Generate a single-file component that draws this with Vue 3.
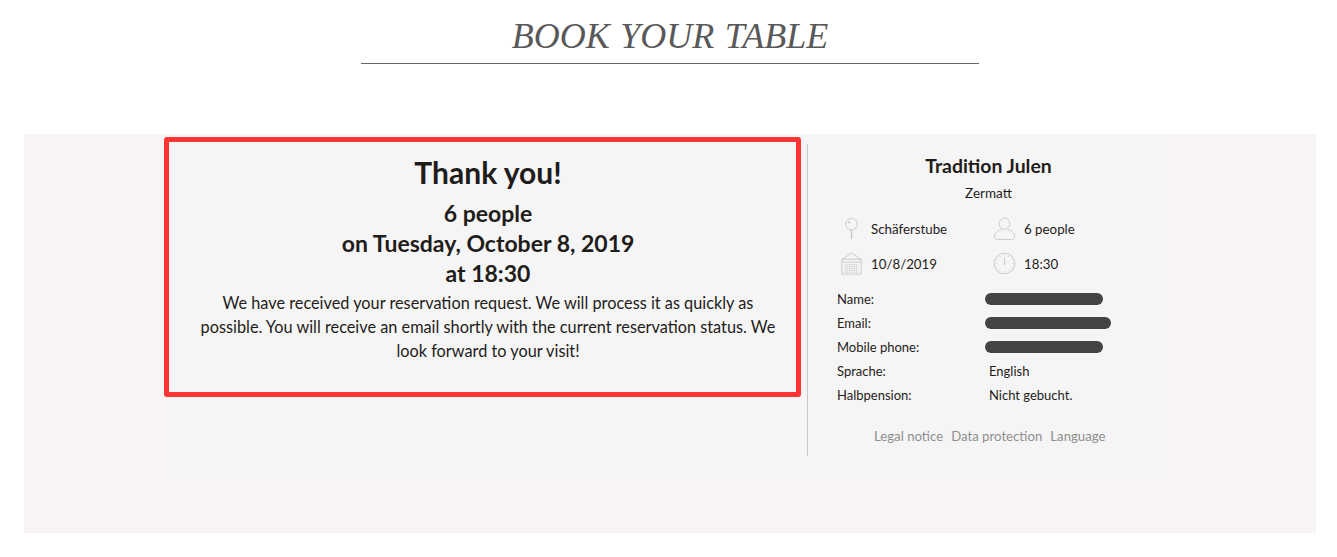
<template>
  <div class="page">
    <header class="head">
      <h1 class="title">BOOK YOUR TABLE</h1>
    </header>

    <section class="band">
      <div class="widget">
        <div class="thanks">
          <h2 class="thanks-title">Thank you!</h2>
          <p class="thanks-sub">6 people</p>
          <p class="thanks-sub">on Tuesday, October 8, 2019</p>
          <p class="thanks-sub">at 18:30</p>
          <p class="thanks-text">
            We have received your reservation request. We will process it as quickly as possible. You will receive an email shortly with the current reservation status. We look forward to your visit!
          </p>
        </div>

        <aside class="summary">
          <h3 class="place">Tradition Julen</h3>
          <div class="city">Zermatt</div>

          <div class="facts">
            <div class="fact">
              <svg class="icon" viewBox="0 0 24 24" fill="none" stroke="#c9c9c9">
                <circle cx="12" cy="7.5" r="6" />
                <circle cx="9.5" cy="5.5" r="1.2" fill="#c9c9c9" stroke="none" />
                <path d="M12 13.5V23" stroke-width="1.5" />
              </svg>
              <span>Schäferstube</span>
            </div>
            <div class="fact">
              <svg class="icon" viewBox="0 0 24 24" fill="none" stroke="#c9c9c9">
                <ellipse cx="12" cy="7" rx="5.5" ry="6" />
                <path d="M8.5 13C5 14.5 1.5 16 1.5 20c0 2.4 1.5 3.5 3.5 3.5h14c2 0 3.5-1.100 3.500-3.500 0-4-3.500-5.500-7-7" />
              </svg>
              <span>6 people</span>
            </div>
            <div class="fact">
              <svg class="icon" viewBox="0 0 24 24" fill="none" stroke="#c9c9c9">
                <path d="M2.500 7.500L12 1l9.500 6.500" />
                <rect x="2" y="7.500" width="20" height="15.500" />
                <path d="M2 10.500h20" />
                <path d="M5 13h14M5 15h14M5 17h14M5 19h14M5 21h14" stroke-width="1" stroke-dasharray="1.500 .8" />
              </svg>
              <span>10/8/2019</span>
            </div>
            <div class="fact">
              <svg class="icon" viewBox="0 0 24 24" fill="none" stroke="#c9c9c9">
                <circle cx="12" cy="12" r="10.800" />
                <path d="M12 6v6" />
                <circle cx="12" cy="12.500" r="1" fill="#c9c9c9" stroke="none" />
                <path d="M12 2.500v1.500M12 20v1.500M2.500 12h1.500M20 12h1.500M7 4l.5 1M17 4l-.5 1M7 20l.5-1M17 20l-.5-1M3.800 7.500l1 .5M20.200 7.500l-1 .5M3.800 16.500l1-.5M20.200 16.500l-1-.5" stroke-width=".8" />
              </svg>
              <span>18:30</span>
            </div>
          </div>

          <dl class="details">
            <div v-for="row in rows" :key="row.label" class="detail">
              <dt>{{ row.label }}</dt>
              <dd>
                <span v-if="row.hidden" class="redacted" :style="{ width: row.hidden + 'px' }"></span>
                <template v-else>{{ row.value }}</template>
              </dd>
            </div>
          </dl>

          <nav class="links">
            <a>Legal notice</a>
            <a>Data protection</a>
            <a>Language</a>
          </nav>
        </aside>
      </div>
    </section>
  </div>
</template>

<script setup>
const rows = [
  { label: 'Name:', hidden: 118 },
  { label: 'Email:', hidden: 126 },
  { label: 'Mobile phone:', hidden: 118 },
  { label: 'Sprache:', value: 'English' },
  { label: 'Halbpension:', value: 'Nicht gebucht.' }
]
</script>

<style>
html, body {
  background: #fff;
}
</style>

<style scoped>
.page {
  width: 1337px;
  height: 557px;
  overflow: hidden;
  background: #fff;
  font-family: Lato, "Noto Sans", sans-serif;
  color: #1f1c1a;
}

.head {
  width: 618px;
  margin-left: 361px;
  height: 64px;
  box-sizing: border-box;
  border-bottom: 1px solid #666;
  text-align: center;
}

.title {
  margin: 0;
  padding-top: 15px;
  font-family: "Liberation Serif", serif;
  font-style: italic;
  font-weight: 400;
  font-size: 36px;
  line-height: 42px;
  word-spacing: 1.500px;
  color: #595959;
}

.band {
  margin: 70px 21px 0 24px;
  height: 399px;
  background: #f8f4f3;
}

.widget {
  display: flex;
  width: 1002px;
  height: 342px;
  margin-left: 144px;
  background: #f5f5f5;
}

.thanks {
  box-sizing: border-box;
  flex: none;
  width: 637px;
  height: 260px;
  margin: 3px 0 0 -4px;
  padding: 12px 18px 0 29px;
  border: 5px solid #fb3333;
  border-radius: 3px;
  text-align: center;
}

.thanks-title {
  margin: 0 0 8px;
  font-size: 30px;
  line-height: 36px;
  font-weight: 700;
}

.thanks-sub {
  margin: 0;
  font-size: 23px;
  line-height: 30px;
  font-weight: 700;
}

.thanks-text {
  margin: 3px 0 0;
  font-size: 16.300px;
  line-height: 24px;
}

.summary {
  box-sizing: border-box;
  flex: none;
  width: 362px;
  height: 312px;
  margin: 10px 0 0 6px;
  padding-top: 10px;
  border-left: 1px solid #c9c9c9;
}

.place {
  margin: 0;
  font-size: 19.400px;
  line-height: 24px;
  font-weight: 700;
  text-align: center;
}

.city {
  margin-top: 7px;
  font-size: 13.500px;
  line-height: 16px;
  text-align: center;
}

.facts {
  display: grid;
  grid-template-columns: 153px 1fr;
  grid-auto-rows: 35px;
  margin: 10px 0 0 32px;
}

.fact {
  display: flex;
  align-items: center;
  gap: 8px;
  font-size: 13.300px;
}

.icon {
  flex: none;
  width: 23px;
  height: 23px;
}

.details {
  margin: 6px 0 0 29px;
}

.detail {
  display: flex;
  height: 24px;
  align-items: center;
  font-size: 13px;
}

.detail dt {
  width: 152px;
}

.detail dd {
  margin: 0;
}

.redacted {
  display: block;
  height: 12px;
  margin-left: -4px;
  border-radius: 6px;
  background: #444;
}

.links {
  display: flex;
  gap: 8px;
  margin: 21px 0 0 66px;
  font-size: 13.200px;
  color: #8e8e8e;
}
</style>
